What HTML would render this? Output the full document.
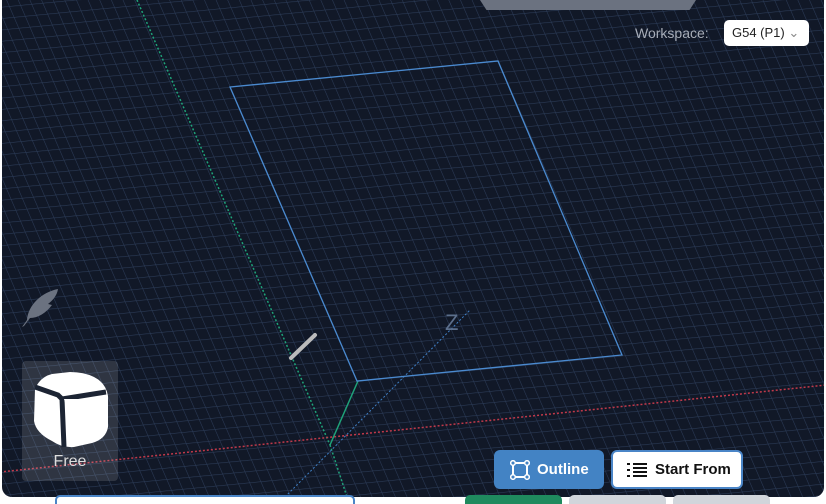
<!DOCTYPE html>
<html><head><style>
html,body{margin:0;width:826px;height:504px;overflow:hidden}
body{background:#fff;font-family:"Liberation Sans",sans-serif;position:relative}
.cv{position:absolute;left:2px;top:0;width:822px;height:497px;background:#111827;border-radius:0 0 10px 10px;overflow:hidden}
.tab{position:absolute;left:480px;top:0;width:216px;height:10px;background:#6b7280;clip-path:polygon(0 0,100% 0,97% 100%,3% 100%)}
.ws{position:absolute;left:635px;top:25px;color:#a7adb8;font-size:14px}
.sel{position:absolute;left:724px;top:20px;width:85px;height:26px;background:#fff;border-radius:5px;font-size:13px;color:#222;line-height:26px;padding-left:8px;box-sizing:border-box}
.free{position:absolute;left:22px;top:361px;width:96px;height:120px;background:rgba(255,255,255,.13);border-radius:4px;color:#ddd;font-size:16px;text-align:center}
.btn{position:absolute;top:450px;height:39px;border-radius:6px;font-weight:bold;font-size:15px;display:flex;align-items:center;box-sizing:border-box}
.b1{left:494px;width:110px;background:#4383c4;color:#fff;padding-left:16px}
.b2{left:611px;width:132px;background:#fff;color:#111;border:2px solid #4a85c7;padding-left:14px}
.bot{position:absolute;top:495px;height:9px;border-radius:5px 5px 0 0;box-sizing:border-box}
</style></head><body>
<div class="cv">
<svg width="822" height="497" viewBox="2 0 822 497" style="position:absolute;left:0;top:0">
<defs><pattern id="g" width="10" height="10" patternUnits="userSpaceOnUse" patternTransform="matrix(1.117,-0.108,0.47,1.09,230,87)"><path d="M0 0H10M0 0V10" stroke="#2c3c58" stroke-width="1" fill="none"/></pattern></defs>
<rect x="0" y="0" width="826" height="497" fill="url(#g)"/>
<line x1="137" y1="0" x2="330" y2="445" stroke="#1fa37a" stroke-width="1.5" stroke-dasharray="2 2"/>
<line x1="330" y1="445" x2="347" y2="497" stroke="#1fa37a" stroke-width="1.5" stroke-dasharray="2 2"/>
<line x1="0" y1="472" x2="826" y2="385" stroke="#c0394a" stroke-width="1.5" stroke-dasharray="2 2"/>
<line x1="285" y1="497" x2="470" y2="310" stroke="#3f7fc4" stroke-width="1" stroke-dasharray="2 2"/>
<line x1="330" y1="445" x2="358" y2="381" stroke="#1fa37a" stroke-width="1.5"/>
<polygon points="230,87 498,61 622,355 357,381" fill="none" stroke="#4a8ad0" stroke-width="1.3"/>
<text x="445" y="330" fill="#5c6f8c" font-size="22" font-family="Liberation Sans">Z</text>
<line x1="291" y1="358" x2="315" y2="335" stroke="#bbb" stroke-width="4" stroke-linecap="round"/>
<path d="M22 327 L27 320 C28 305 42 292 58 289 C57 296 52 301 48 304 L52 305 C46 313 38 318 30 318 L24 326Z" fill="#6b7280"/>
</svg>
</div>
<div class="tab"></div>
<div class="ws">Workspace:</div>
<div class="sel">G54 (P1) <span style="color:#888">&#8964;</span></div>
<div class="free">
<svg width="96" height="92" viewBox="0 0 96 92" style="position:absolute;left:0;top:0">
<path d="M13 28 Q18 16 30 13 L48 11 Q62 11 72 16 Q84 22 86 35 L86 66 Q84 78 70 82 L52 86 Q40 87 30 80 Q14 72 12 60Z" fill="#fff"/>
<path d="M13 26 L36 34 L40 38 M40 38 L84 31 M40 38 L42 86" stroke="#1c2433" stroke-width="5" fill="none"/>
<path d="M42 38 L60 38 L64 48 L54 56 L46 52Z" fill="#fff"/>
</svg>
<div style="position:absolute;top:92px;width:96px">Free</div></div>
<div class="btn b1"><svg width="20" height="20" style="margin-right:7px"><rect x="3" y="3" width="14" height="14" fill="none" stroke="#fff" stroke-width="2"/><g fill="#4383c4" stroke="#fff" stroke-width="1.5"><circle cx="3" cy="3" r="2.3"/><circle cx="17" cy="3" r="2.3"/><circle cx="3" cy="17" r="2.3"/><circle cx="17" cy="17" r="2.3"/></g></svg>Outline</div>
<div class="btn b2"><svg width="20" height="16" style="margin-right:8px"><g fill="#111"><rect x="6" y="1" width="14" height="2"/><rect x="6" y="5" width="14" height="2"/><rect x="6" y="9" width="14" height="2"/><rect x="6" y="13" width="14" height="2"/><rect x="0" y="1" width="3" height="2"/><rect x="0" y="7" width="3" height="2"/><rect x="0" y="13" width="3" height="2"/></g></svg>Start From</div>
<div class="bot" style="left:55px;width:300px;border:2px solid #4a85c7;border-bottom:0;background:#fff"></div>
<div class="bot" style="left:465px;width:97px;background:#1f8a5e"></div>
<div class="bot" style="left:569px;width:97px;background:#d1d5db"></div>
<div class="bot" style="left:673px;width:97px;background:#d1d5db"></div>
</body></html>
